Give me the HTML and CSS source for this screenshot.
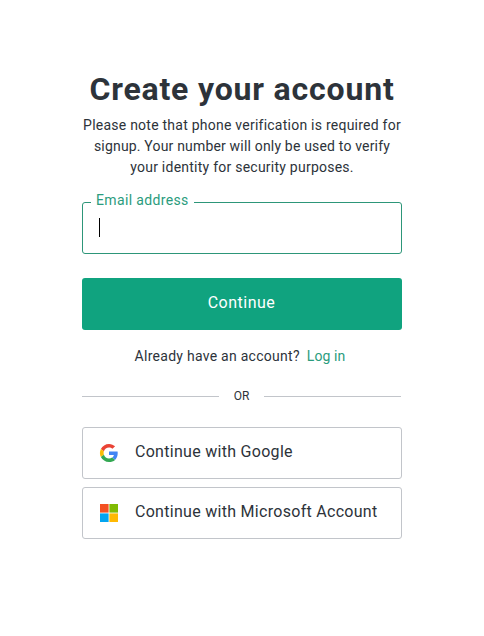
FILE: index.html
```html
<!DOCTYPE html>
<html lang="en">
<head>
    <meta charset="UTF-8">
    <title>Create your account</title>
    <link rel="stylesheet" href="styles.css">
</head>
<body>
    <main class="signup">
        <h1>Create your account</h1>
        <p class="note">
            Please note that phone verification is required for<br>
            <span class="line2">signup. Your number will only be used to verify</span><br>
            your identity for security purposes.
        </p>

        <form>
            <div class="field">
                <label for="email">Email address</label>
                <input type="text" id="email" name="email">
                <span class="caret"></span>
            </div>
            <button type="submit" class="continue">Continue</button>
        </form>

        <p class="login">Already have an account?<a href="#">Log in</a></p>

        <div class="divider"><span>OR</span></div>

        <div class="social">
            <button type="button">
                <svg width="20" height="20" viewBox="-2.4 -2.4 52.8 52.8">
                    <path fill="#EA4335" d="M24 9.5c3.54 0 6.71 1.22 9.21 3.6l6.85-6.85C35.9 2.38 30.47 0 24 0 14.62 0 6.51 5.38 2.56 13.22l7.98 6.19C12.43 13.72 17.74 9.5 24 9.5z"/>
                    <path fill="#4285F4" d="M46.98 24.55c0-1.57-.15-3.09-.38-4.55H24v9.02h12.94c-.58 2.96-2.26 5.48-4.78 7.18l7.73 6c4.51-4.18 7.09-10.36 7.09-17.65z"/>
                    <path fill="#FBBC05" d="M10.53 28.59c-.48-1.45-.76-2.99-.76-4.59s.27-3.14.76-4.59l-7.98-6.19C.92 16.46 0 20.12 0 24c0 3.88.92 7.54 2.56 10.78l7.97-6.19z"/>
                    <path fill="#34A853" d="M24 48c6.48 0 11.93-2.13 15.89-5.81l-7.73-6c-2.15 1.45-4.92 2.3-8.16 2.3-6.26 0-11.57-4.22-13.47-9.91l-7.98 6.19C6.51 42.62 14.62 48 24 48z"/>
                </svg>
                <span>Continue with Google</span>
            </button>
            <button type="button">
                <svg width="20" height="20" viewBox="0 0 20 20">
                    <rect fill="#F35022" x="1" y="1" width="8.6" height="8.6"/>
                    <rect fill="#80BB03" x="10.4" y="1" width="8.6" height="8.6"/>
                    <rect fill="#03A5F0" x="1" y="10.4" width="8.6" height="8.6"/>
                    <rect fill="#FFB903" x="10.4" y="10.4" width="8.6" height="8.6"/>
                </svg>
                <span>Continue with Microsoft Account</span>
            </button>
        </div>
    </main>
</body>
</html>
```
FILE: styles.css
```css
* {
    box-sizing: border-box;
}
body {
    margin: 0;
    min-height: 100vh;
    background-color: #fff;
    color: #2d333a;
    font-family: Roboto, "Liberation Sans", sans-serif;
}
.signup {
    width: 320px;
    margin-left: 82px;
    padding-top: 69px;
}
h1 {
    margin: 0;
    font-size: 32px;
    line-height: 40px;
    font-weight: 700;
    letter-spacing: 0.82px;
    text-align: center;
    white-space: nowrap;
}
.note {
    margin: 6px 0 0;
    font-size: 14px;
    line-height: 21px;
    letter-spacing: 0.24px;
    text-align: center;
    white-space: nowrap;
}
.line2 {
    letter-spacing: 0.18px;
}
.field {
    position: relative;
    height: 52px;
    margin-top: 24px;
}
.field label {
    position: absolute;
    top: -11px;
    left: 9px;
    padding: 0 5px;
    background-color: #fff;
    color: #2b9c7d;
    font-size: 14px;
    line-height: 18px;
    letter-spacing: 0.35px;
    white-space: nowrap;
}
.field input {
    display: block;
    width: 100%;
    height: 52px;
    padding: 0 16px;
    border: 1px solid #2d9679;
    border-radius: 3px;
    outline: none;
    font-size: 16px;
}
.caret {
    position: absolute;
    top: 16px;
    left: 17px;
    width: 1px;
    height: 19px;
    background-color: #000;
}
.continue {
    display: block;
    width: 100%;
    height: 52px;
    margin-top: 24px;
    padding: 0 1px 3px 0;
    border: none;
    border-radius: 3px;
    background-color: #10a37f;
    color: #fff;
    font-family: inherit;
    font-size: 16px;
    letter-spacing: 0.5px;
}
.login {
    display: flex;
    justify-content: center;
    margin: 16px 0 0;
    padding-right: 4px;
    font-size: 14px;
    line-height: 21px;
    letter-spacing: 0.27px;
    white-space: nowrap;
}
.login a {
    margin-left: 7px;
    color: #2b9c7d;
    letter-spacing: 0.1px;
    text-decoration: none;
}
.divider {
    display: flex;
    align-items: center;
    height: 18px;
    margin-top: 20px;
    margin-right: 1px;
    font-size: 12px;
    line-height: 18px;
}
.divider::before,
.divider::after {
    content: "";
    flex: 1;
    height: 1px;
    background-color: #c2c5ca;
}
.divider span {
    width: 45px;
    text-align: center;
}
.social {
    display: flex;
    flex-direction: column;
    gap: 8px;
    margin-top: 22px;
}
.social button {
    display: flex;
    align-items: center;
    gap: 16px;
    height: 52px;
    padding: 0 16px;
    border: 1px solid #c2c5ca;
    border-radius: 3px;
    background-color: #fff;
    color: #2d333a;
    font-family: inherit;
    font-size: 16px;
    letter-spacing: 0.29px;
    white-space: nowrap;
}
.social span {
    padding-bottom: 3px;
}
```
